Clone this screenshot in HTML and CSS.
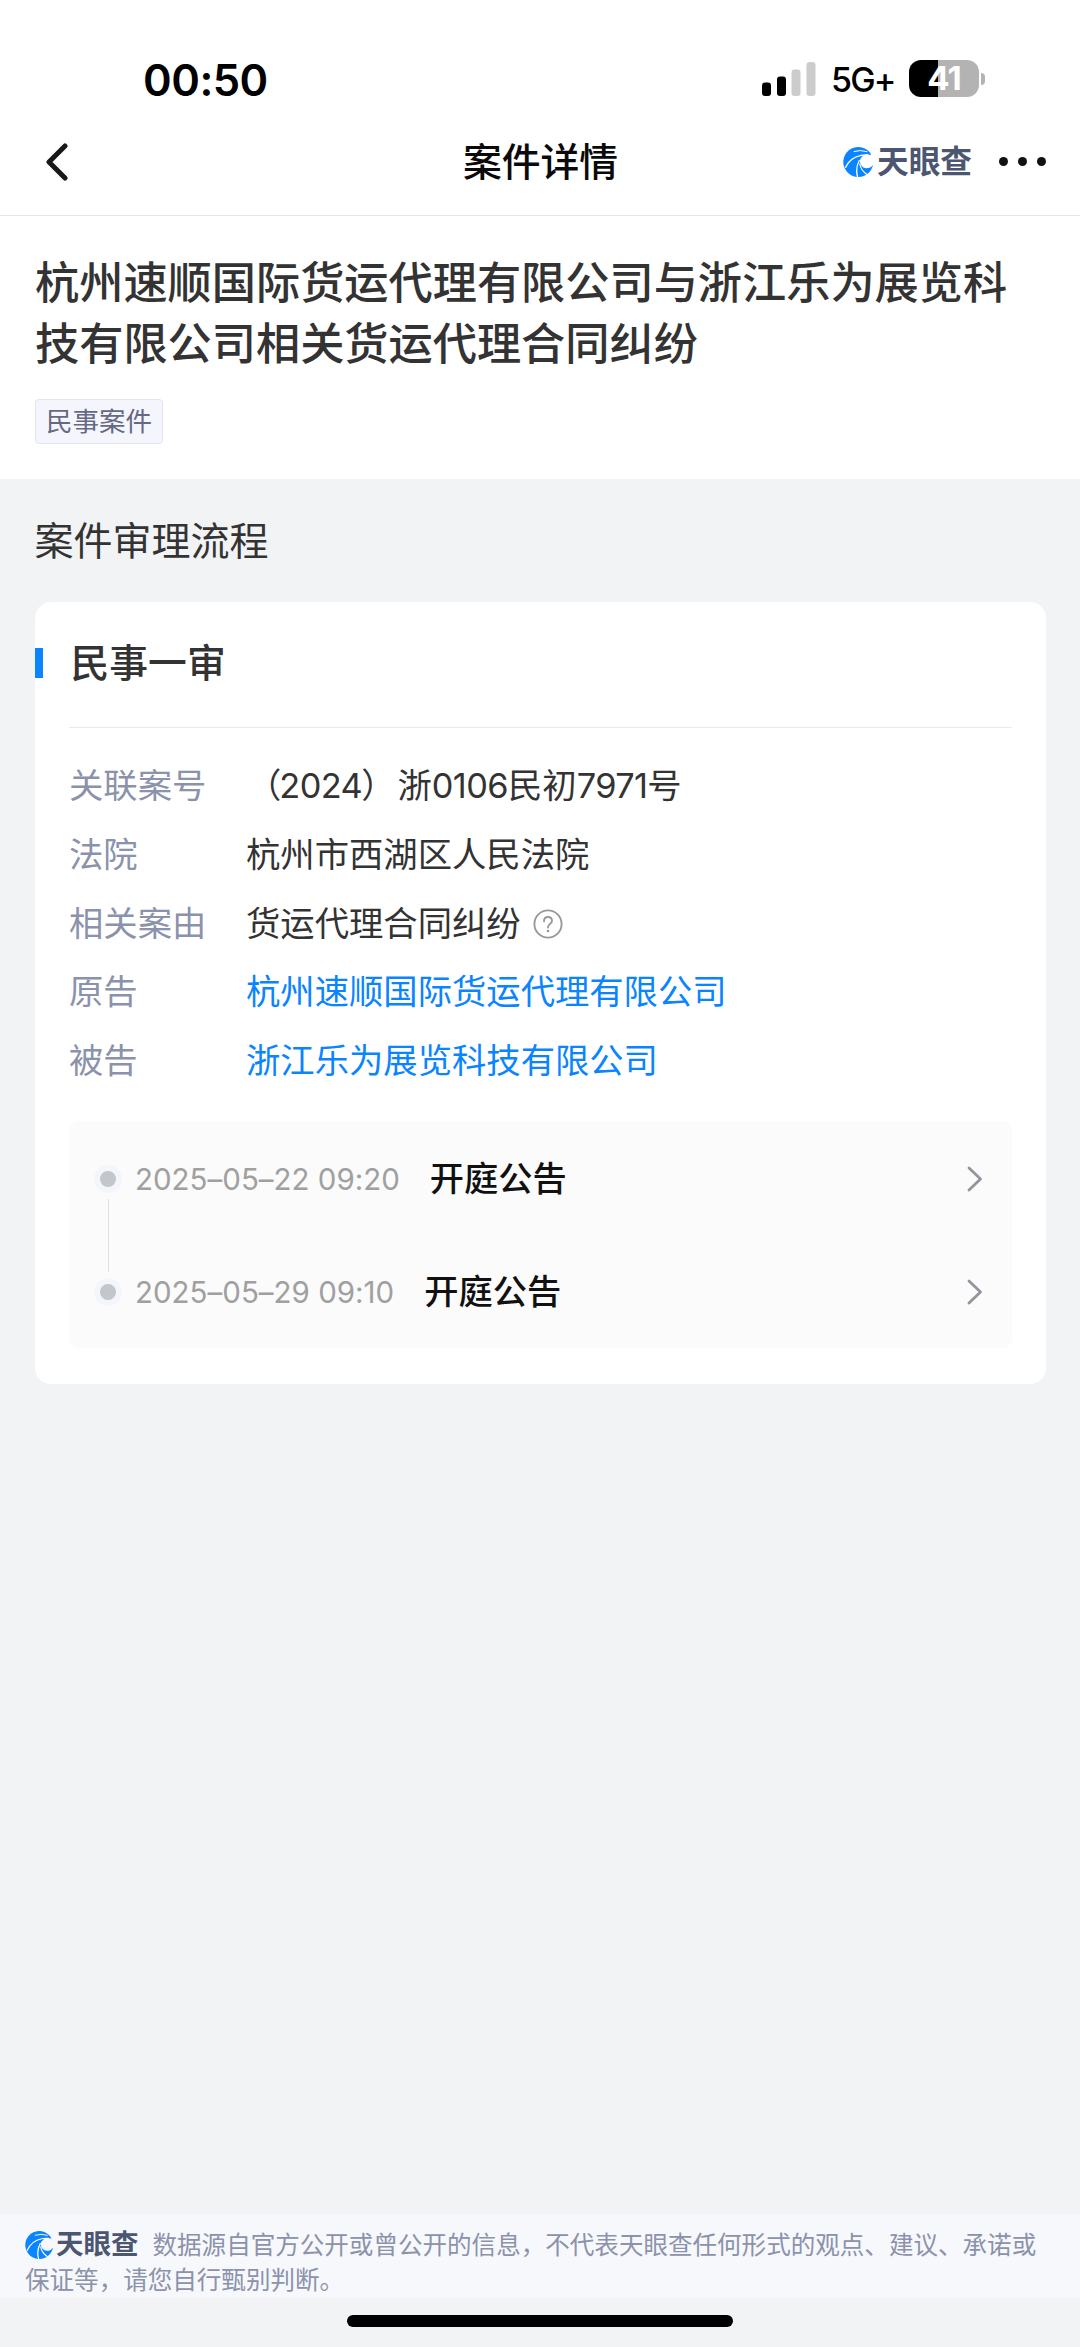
FILE: index.html
```html
<!DOCTYPE html>
<html lang="zh-CN">
<head>
<meta charset="utf-8">
<title>案件详情</title>
<link rel="stylesheet" href="styles.css">
</head>
<body>
<svg width="0" height="0" class="defs">
  <defs>
    <symbol id="tyc" viewBox="0 0 30 30">
      <path fill="#0a84ff" d="M29.6 19.5A15 15 0 1 1 27 5.6L28.3 8.2Q24 6.600 20.500 8.500Q15.500 12 17.500 17Q20 22.500 26.500 20.800Q28.300 20.400 29.600 18Z"/>
      <g fill="none" stroke="#fff" stroke-linecap="round">
        <path stroke-width="1.300" d="M2.500 20.500Q7 10.500 18 8.300Q21 7.700 25 8"/>
        <path stroke-width="1" d="M11 4.500Q17 2.500 24 4.600"/>
        <path stroke-width="1.300" d="M14.500 29.500Q12.200 21 16.300 13.500"/>
        <path stroke-width="1.200" d="M24 27.500Q18 23.500 16.800 17"/>
      </g>
    </symbol>
  </defs>
</svg>
<div class="screen">
  <header class="top">
    <div class="status">
      <span class="clock">00:50</span>
      <div class="status-right">
        <svg class="signal" width="54" height="34" viewBox="0 0 54 34">
          <rect x="0" y="20.500" width="9" height="13.500" rx="3"/>
          <rect x="15" y="14.500" width="9" height="19.500" rx="3"/>
          <rect x="29.500" y="7.500" width="9" height="26.500" rx="3" fill="#ccc"/>
          <rect x="44.500" y="0" width="9" height="34" rx="3" fill="#ccc"/>
        </svg>
        <span class="network">5G+</span>
        <div class="battery"><span>41</span></div>
        <i class="battery-tip"></i>
      </div>
    </div>
    <nav class="nav">
      <svg class="back" width="22" height="38" viewBox="0 0 22 38"><path d="M19 3L3 19L19 35"/></svg>
      <h1>案件详情</h1>
      <div class="nav-right">
        <svg class="logo" width="30" height="30"><use href="#tyc"/></svg>
        <span class="brand">天眼查</span>
        <div class="more"><i></i><i></i><i></i></div>
      </div>
    </nav>
  </header>
  <section class="case">
    <h2>杭州速顺国际货运代理有限公司与浙江乐为展览科技有限公司相关货运代理合同纠纷</h2>
    <span class="tag">民事案件</span>
  </section>
  <main>
    <h3 class="section-title">案件审理流程</h3>
    <article class="card">
      <h4>民事一审</h4>
      <dl>
        <dt>关联案号</dt><dd><span class="open">（</span><span class="num">2024</span><span class="close">）</span>浙<span class="num">0106</span>民初<span class="num">7971</span>号</dd>
        <dt>法院</dt><dd>杭州市西湖区人民法院</dd>
        <dt>相关案由</dt><dd>货运代理合同纠纷<svg class="help" width="30" height="30" viewBox="0 0 30 30"><circle cx="15" cy="15" r="13.600"/><path d="M11 12.300Q11 8 15 8Q19 8 19 11.800Q19 13.700 17 15Q15 16.300 15 18.600"/><circle class="dot" cx="15" cy="22" r="1.300"/></svg></dd>
        <dt>原告</dt><dd class="link">杭州速顺国际货运代理有限公司</dd>
        <dt>被告</dt><dd class="link">浙江乐为展览科技有限公司</dd>
      </dl>
      <div class="timeline">
        <div class="event">
          <i class="node"></i><time>2025–05–22 09:20</time><b>开庭公告</b>
          <svg class="chevron" width="16" height="28" viewBox="0 0 16 28"><path d="M2 3L13.500 14L2 25"/></svg>
        </div>
        <i class="line"></i>
        <div class="event">
          <i class="node"></i><time>2025–05–29 09:10</time><b>开庭公告</b>
          <svg class="chevron" width="16" height="28" viewBox="0 0 16 28"><path d="M2 3L13.500 14L2 25"/></svg>
        </div>
      </div>
    </article>
  </main>
  <footer>
    <svg class="logo" width="28" height="28"><use href="#tyc"/></svg><span class="brand">天眼查</span>数据源自官方公开或曾公开的信息，不代表天眼查任何形式的观点、建议、承诺或<br>保证等，请您自行甄别判断。
  </footer>
  <div class="home"><i></i></div>
</div>
</body>
</html>
```

FILE: styles.css
```css
* { box-sizing: border-box; margin: 0; padding: 0; }
body {
  font-family: Inter, "Noto Sans CJK SC", sans-serif;
  font-feature-settings: "calt" 0;
  background: #f2f3f5;
  color: #333;
}
.defs { display: block; }
i { display: block; font-style: normal; }
svg { flex: none; }
.screen { display: flex; flex-direction: column; width: 1080px; height: 2347px; }

.top { height: 216px; background: #fff; border-bottom: 1px solid #e4e5e7; }
.status { display: flex; justify-content: space-between; height: 108px; padding: 52px 95px 0 143px; color: #000; }
.clock { font-size: 43.500px; font-weight: 600; line-height: 56px; letter-spacing: -.5px; }
.status-right { display: flex; align-items: center; height: 56px; }
.signal { margin-top: -3px; }
.network { width: 70px; margin-left: 15px; font-size: 34px; font-weight: 500; line-height: 58px; letter-spacing: -1.800px; }
.battery {
  width: 70px; height: 37px; margin: -3px 0 0 8px; border-radius: 12px;
  background: linear-gradient(90deg, #000 41%, #b3b3b3 41%);
  color: #fff; font-size: 33px; font-weight: 700; line-height: 37px; text-align: center; letter-spacing: -1px;
}
.battery-tip { width: 4px; height: 12px; margin: -3px 0 0 2px; border-radius: 0 5px 5px 0; background: #b3b3b3; }
.nav { display: grid; grid-template-columns: 1fr auto 1fr; align-items: center; height: 107px; padding: 0 34px 0 46px; }
.back path { fill: none; stroke: #17181a; stroke-width: 5; stroke-linecap: round; stroke-linejoin: round; }
.nav h1 { color: #0a0a0a; font-size: 38.800px; font-weight: 500; line-height: 54px; margin-left: -11px; }
.nav-right { display: flex; align-items: center; justify-content: flex-end; }
.brand { color: #4b5670; font-weight: 700; }
.nav .brand { margin-left: 4px; font-size: 31.700px; line-height: 34px; }
.more { display: flex; gap: 10px; margin-left: 27px; }
.more i { width: 9px; height: 9px; border-radius: 50%; background: #111; }

.case { height: 263px; padding: 37px 35px 0; background: #fff; }
.case h2 { width: 1010px; font-size: 44.200px; font-weight: 500; line-height: 61.300px; word-break: break-all; }
.tag {
  display: block; width: 128px; height: 45px; margin-top: 23px; border: 1px solid #e3e4ef; border-radius: 4px;
  background: #f5f6fd; color: #666884; font-size: 26.500px; line-height: 43px; text-align: center;
}

main { flex: 1; padding: 0 34px 0 34.500px; }
.section-title { height: 123px; padding-top: 34px; font-size: 39px; font-weight: 400; line-height: 56px; }
.card { height: 782px; padding: 0 34px 0 34.500px; border-radius: 16px; background: #fff; }
.card h4 {
  height: 125px; margin-left: -34.500px; padding: 33px 0 0 36px;
  font-size: 38.800px; font-weight: 500; line-height: 56px;
  background: linear-gradient(#0a84ff, #0a84ff) 0 46px / 8px 30px no-repeat;
}
dl {
  display: grid; grid-template-columns: 177px 1fr; grid-auto-rows: 68.700px; align-items: center;
  height: 394px; padding-top: 24px; border-top: 1px solid #e9eaec; font-size: 34.350px; line-height: 50px;
}
dt { color: #8b92ab; }
dd { display: flex; align-items: center; }
.link { color: #0a84ff; }
.num { letter-spacing: -.6px; }
.open { margin: 0 -2px 0 1px; }
.close { margin: 0 2px 0 -1px; }
.help { margin-left: 12px; }
.help circle, .help path { fill: none; stroke: #999; stroke-width: 1.900; stroke-linecap: round; }
.help .dot { fill: #999; stroke: none; }
.timeline { display: flex; flex-direction: column; justify-content: center; height: 227px; padding-top: 2px; border-radius: 9px; background: #fbfbfc; }
.event { display: flex; align-items: center; height: 40px; padding: 0 29px 0 25px; }
.node { width: 28px; height: 28px; border: 6.500px solid #f3f6fa; border-radius: 50%; background: #c3c7cc; }
time { margin: 0 30px 0 13px; color: #a0a0a0; font-size: 29.500px; line-height: 40px; }
.event b { color: #111; font-size: 34.250px; font-weight: 500; line-height: 40px; }
.chevron { margin-left: auto; }
.chevron path { fill: none; stroke: #94959c; stroke-width: 2.800; stroke-linecap: round; stroke-linejoin: round; }
.line { width: 1px; height: 73px; margin-left: 39px; background: #e0e1e3; }

footer { height: 84px; padding: 14px 25px 0; background: #f7f8fb; color: #8b92ab; font-size: 24.550px; line-height: 35px; white-space: nowrap; }
footer .logo { vertical-align: -5px; }
footer .brand { margin: 0 14px 0 3px; font-size: 27.500px; line-height: 30px; }
.home { height: 49px; padding-top: 17px; }
.home i { width: 386px; height: 12px; margin: 0 auto; border-radius: 6px; background: #000; }
```
